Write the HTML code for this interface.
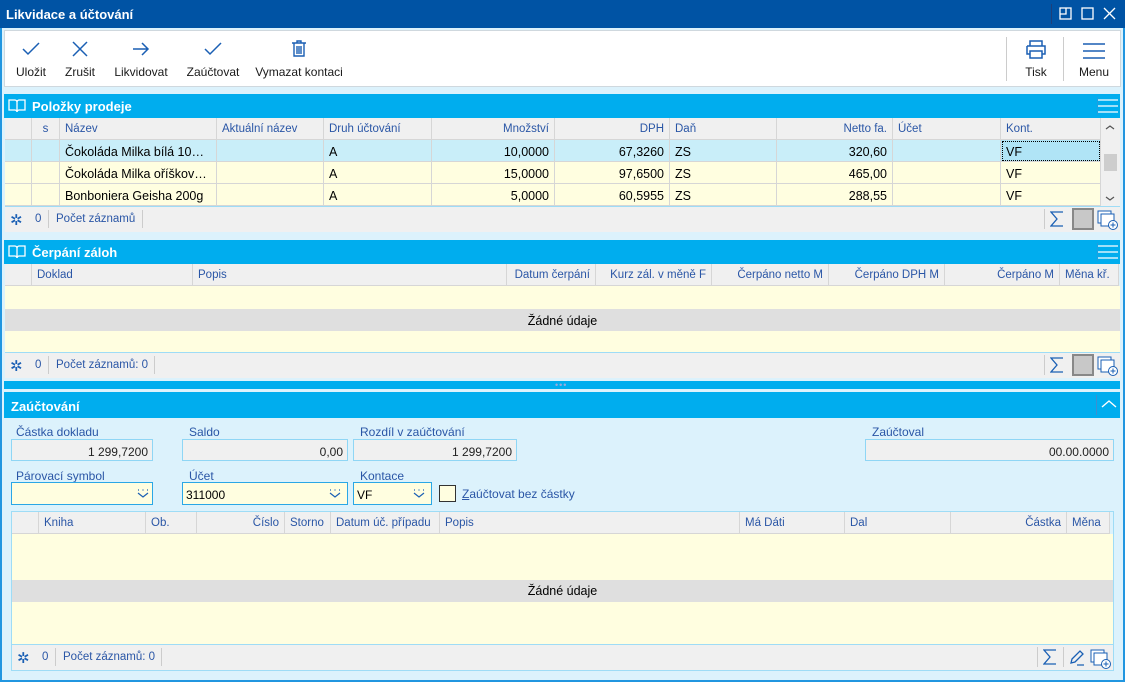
<!DOCTYPE html>
<html><head><meta charset="utf-8"><style>
*{box-sizing:border-box;margin:0;padding:0}
body{width:1125px;height:682px;overflow:hidden;background:#dcf2fc;font-family:"Liberation Sans",sans-serif;font-size:12px;color:#000;position:relative}
.a{position:absolute}
.title{left:0;top:0;width:1125px;height:28px;background:#0053a4;color:#fff;font-weight:bold;font-size:13px;padding:7px 0 0 6px}
.frame{left:0;top:28px;width:1125px;height:654px;border:2px solid #2196e0;border-top:none}
.tb{left:4px;top:30px;width:1117px;height:57px;background:#fff;border:1px solid #cfd8de}
.btn{position:absolute;top:0;text-align:center;font-size:12px;color:#1a1a1a}
.btn svg{display:block;margin:10px auto 0}
.btn span{display:block;margin-top:8px}
.sh{left:4px;width:1116px;background:#00adee;color:#fff;font-weight:bold;font-size:13px}
.row{position:absolute;left:5px;display:flex;height:22px}
.row div{border-right:1px solid #d6d6d6;border-bottom:1px solid #d6d6d6;padding:5px 5px 0;white-space:nowrap;overflow:hidden;font-size:12.5px}
.hd div{color:#2a56a6;font-size:11.5px;background:#f0f0f0;padding-top:5px}
.r{text-align:right}
.yel div{background:#fffee0}
.sel div{background:#c9eef9}
.foot{left:5px;width:1115px;height:26px;background:#f0f0f0;border-top:1px solid #9edcf6;color:#2a56a6;font-size:11.5px}
.lbl{color:#2a56a6;font-size:12px}
.inp{height:22px;border:1px solid #8fd6f5;background:#f0f0f0;text-align:right;padding:5px 4px 0 0;font-size:12px;color:#222}
.inpy{height:23px;border:1px solid #2aa7e6;background:#fffee0;padding:5px 0 0 3px}
</style></head><body>
<div class="a title">Likvidace a účtování</div>
<div class="a" style="left:1051px;top:4px;width:1px;height:20px;background:#1d3f7a"></div>
<svg class="a" style="left:1058px;top:6px" width="60" height="16" viewBox="0 0 60 16" fill="none" stroke="#fff" stroke-width="1.3"><rect x="2" y="2" width="11" height="11"/><path d="M2 8h6V2"/><rect x="24" y="2" width="11" height="11"/><path d="M46 2l11 11M57 2L46 13"/></svg>
<div class="a frame"></div>
<div class="a tb">
 <div class="btn" style="left:6px;width:40px"><svg width="20" height="16"><path d="M2 8l5 5 11-11" fill="none" stroke="#1a5fb4" stroke-width="1.5"/></svg><span>Uložit</span></div>
 <div class="btn" style="left:55px;width:40px"><svg width="20" height="16"><path d="M3 1l14 14M17 1L3 15" fill="none" stroke="#1a5fb4" stroke-width="1.5"/></svg><span>Zrušit</span></div>
 <div class="btn" style="left:104px;width:64px"><svg width="20" height="16"><path d="M2 8h15M11 2l6 6-6 6" fill="none" stroke="#1a5fb4" stroke-width="1.5"/></svg><span>Likvidovat</span></div>
 <div class="btn" style="left:176px;width:64px"><svg width="20" height="16"><path d="M2 8l5 5 11-11" fill="none" stroke="#1a5fb4" stroke-width="1.5"/></svg><span>Zaúčtovat</span></div>
 <div class="btn" style="left:248px;width:92px"><svg width="20" height="18" style="margin-top:8px"><path d="M3 4h14M8 4V2h4v2M5 4v13h10V4M8 7v8M10 7v8M12 7v8" fill="none" stroke="#1a5fb4" stroke-width="1.4"/></svg><span>Vymazat kontaci</span></div>
 <div class="a" style="left:1001px;top:6px;width:1px;height:44px;background:#ccc"></div>
 <div class="a" style="left:1058px;top:6px;width:1px;height:44px;background:#ccc"></div>
 <div class="btn" style="left:1010px;width:42px"><svg width="24" height="20" style="margin-top:8px"><path d="M6 7V2h12v5M3 7h18v8h-3M6 15H3V7M6 12h12v7H6z" fill="none" stroke="#1a5fb4" stroke-width="1.5"/></svg><span style="margin-top:6px">Tisk</span></div>
 <div class="btn" style="left:1064px;width:50px"><svg width="24" height="20" style="margin-top:10px"><path d="M1 3h22M1 10h22M1 17h22" stroke="#1a5fb4" stroke-width="1.5"/></svg><span style="margin-top:4px">Menu</span></div>
</div>

<div class="a sh" style="top:94px;height:24px;padding:5px 0 0 28px">Položky prodeje</div>
<svg class="a" style="left:8px;top:98px" width="18" height="16"><path d="M1 2h6c1 0 2 1 2 2v10c0-1-1-2-2-2H1zM17 2h-6c-1 0-2 1-2 2v10c0-1 1-2 2-2h6z" fill="none" stroke="#fff" stroke-width="1.3"/></svg>
<svg class="a" style="left:1097px;top:97px" width="22" height="18"><path d="M1 3h20M1 9h20M1 15h20" stroke="#fff" stroke-width="1.3"/><path d="M0 0v18" stroke="#3c8fd0"/></svg>
<div class="row hd" style="top:118px"><div style="width:27px"></div><div style="width:28px;text-align:center">s</div><div style="width:157px">Název</div><div style="width:107px">Aktuální název</div><div style="width:108px">Druh účtování</div><div class="r" style="width:123px">Množství</div><div class="r" style="width:115px">DPH</div><div style="width:107px">Daň</div><div class="r" style="width:116px">Netto fa.</div><div style="width:108px">Účet</div><div style="width:100px">Kont.</div></div>
<div class="row sel" style="top:140px"><div style="width:27px"></div><div style="width:28px"></div><div style="width:157px">Čokoláda Milka bílá 10…</div><div style="width:107px"></div><div style="width:108px">A</div><div class="r" style="width:123px">10,0000</div><div class="r" style="width:115px">67,3260</div><div style="width:107px">ZS</div><div class="r" style="width:116px">320,60</div><div style="width:108px"></div><div style="width:100px;background:#b0e4f6;outline:1px dotted #000;outline-offset:-2px">VF</div></div>
<div class="row yel" style="top:162px"><div style="width:27px"></div><div style="width:28px"></div><div style="width:157px">Čokoláda Milka oříškov…</div><div style="width:107px"></div><div style="width:108px">A</div><div class="r" style="width:123px">15,0000</div><div class="r" style="width:115px">97,6500</div><div style="width:107px">ZS</div><div class="r" style="width:116px">465,00</div><div style="width:108px"></div><div style="width:100px">VF</div></div>
<div class="row yel" style="top:184px"><div style="width:27px"></div><div style="width:28px"></div><div style="width:157px">Bonboniera Geisha 200g</div><div style="width:107px"></div><div style="width:108px">A</div><div class="r" style="width:123px">5,0000</div><div class="r" style="width:115px">60,5955</div><div style="width:107px">ZS</div><div class="r" style="width:116px">288,55</div><div style="width:108px"></div><div style="width:100px">VF</div></div>
<div class="a" style="left:1101px;top:118px;width:19px;height:88px;background:#f0f0f0"></div>
<div class="a" style="left:1104px;top:154px;width:13px;height:17px;background:#cdcdcd"></div>
<svg class="a" style="left:1105px;top:124px" width="10" height="80"><path d="M1 5l4-3 4 3M1 73l4 3 4-3" fill="none" stroke="#555" stroke-width="1.2"/></svg>
<div class="a foot" style="top:206px"></div>

<div class="a sh" style="top:240px;height:24px;padding:5px 0 0 28px">Čerpání záloh</div>
<svg class="a" style="left:8px;top:244px" width="18" height="16"><path d="M1 2h6c1 0 2 1 2 2v10c0-1-1-2-2-2H1zM17 2h-6c-1 0-2 1-2 2v10c0-1 1-2 2-2h6z" fill="none" stroke="#fff" stroke-width="1.3"/></svg>
<svg class="a" style="left:1097px;top:243px" width="22" height="18"><path d="M1 3h20M1 9h20M1 15h20" stroke="#fff" stroke-width="1.3"/><path d="M0 0v18" stroke="#3c8fd0"/></svg>
<div class="row hd" style="top:264px"><div style="width:27px"></div><div style="width:161px">Doklad</div><div style="width:314px">Popis</div><div class="r" style="width:89px">Datum čerpání</div><div class="r" style="width:116px">Kurz zál. v měně F</div><div class="r" style="width:117px">Čerpáno netto M</div><div class="r" style="width:116px">Čerpáno DPH M</div><div class="r" style="width:115px">Čerpáno M</div><div style="width:59px">Měna kř.</div></div>
<div class="a" style="left:5px;top:286px;width:1115px;height:23px;background:#fffee0"></div>
<div class="a" style="left:5px;top:309px;width:1115px;height:22px;background:#dfdfdf;text-align:center;padding-top:5px;font-size:12.5px">Žádné údaje</div>
<div class="a" style="left:5px;top:331px;width:1115px;height:22px;background:#fffee0"></div>
<div class="a foot" style="top:352px"></div>

<div class="a" style="left:4px;top:381px;width:1116px;height:8px;background:#00adee"></div>
<div class="a" style="left:555px;top:380px;color:#9ad;font-size:9px;letter-spacing:1px">•••</div>

<div class="a sh" style="top:392px;height:26px;padding:7px 0 0 7px">Zaúčtování</div>
<div class="a" style="left:1096px;top:395px;width:1px;height:20px;background:#3c8fd0"></div>
<svg class="a" style="left:1100px;top:398px" width="18" height="12"><path d="M2 9l7-6 7 6" fill="none" stroke="#fff" stroke-width="1.4"/></svg>

<div class="a lbl" style="left:16px;top:425px">Částka dokladu</div>
<div class="a lbl" style="left:189px;top:425px">Saldo</div>
<div class="a lbl" style="left:360px;top:425px">Rozdíl v zaúčtování</div>
<div class="a lbl" style="left:872px;top:425px">Zaúčtoval</div>
<div class="a inp" style="left:11px;top:439px;width:142px">1 299,7200</div>
<div class="a inp" style="left:182px;top:439px;width:166px">0,00</div>
<div class="a inp" style="left:353px;top:439px;width:164px">1 299,7200</div>
<div class="a inp" style="left:865px;top:439px;width:249px">00.00.0000</div>
<div class="a lbl" style="left:16px;top:469px">Párovací symbol</div>
<div class="a lbl" style="left:189px;top:469px">Účet</div>
<div class="a lbl" style="left:360px;top:469px">Kontace</div>
<div class="a inpy" style="left:11px;top:482px;width:142px"></div>
<div class="a inpy" style="left:182px;top:482px;width:166px">311000</div>
<div class="a inpy" style="left:353px;top:482px;width:79px">VF</div>
<svg class="a" style="left:137px;top:489px" width="14" height="10"><path d="M1 4l5 4 5-4M1 1h1M5.5 1h1M10 1h1" fill="none" stroke="#1a5fb4" stroke-width="1.2"/></svg>
<svg class="a" style="left:329px;top:489px" width="14" height="10"><path d="M1 4l5 4 5-4M1 1h1M5.5 1h1M10 1h1" fill="none" stroke="#1a5fb4" stroke-width="1.2"/></svg>
<svg class="a" style="left:413px;top:489px" width="14" height="10"><path d="M1 4l5 4 5-4M1 1h1M5.5 1h1M10 1h1" fill="none" stroke="#1a5fb4" stroke-width="1.2"/></svg>
<div class="a" style="left:439px;top:485px;width:17px;height:17px;border:1px solid #333;background:#fffee0"></div>
<div class="a lbl" style="left:462px;top:487px"><u>Z</u>aúčtovat bez částky</div>

<div class="a" style="left:11px;top:511px;width:1103px;height:160px;border:1px solid #9edcf6"></div>
<div class="row hd" style="left:12px;top:512px"><div style="width:27px"></div><div style="width:107px">Kniha</div><div style="width:51px">Ob.</div><div class="r" style="width:88px">Číslo</div><div style="width:46px">Storno</div><div style="width:109px">Datum úč. případu</div><div style="width:300px">Popis</div><div style="width:105px">Má Dáti</div><div style="width:106px">Dal</div><div class="r" style="width:116px">Částka</div><div style="width:43px">Měna</div></div>
<div class="a" style="left:12px;top:534px;width:1101px;height:46px;background:#fffee0"></div>
<div class="a" style="left:12px;top:580px;width:1101px;height:22px;background:#dfdfdf;text-align:center;padding-top:4px;font-size:12.5px">Žádné údaje</div>
<div class="a" style="left:12px;top:602px;width:1101px;height:42px;background:#fffee0"></div>
<div class="a foot" style="left:12px;width:1101px;top:644px"></div>

<div class="a" style="left:10px;top:211px;color:#1a5fb4;font-size:15px">✲</div>
<div class="a lbl" style="left:35px;top:213px;font-size:11.5px">0</div>
<div class="a" style="left:48px;top:210px;width:1px;height:18px;background:#ccc"></div>
<div class="a lbl" style="left:56px;top:213px;font-size:11.5px">Počet záznamů</div>
<div class="a" style="left:142px;top:210px;width:1px;height:18px;background:#ccc"></div>

<div class="a" style="left:10px;top:357px;color:#1a5fb4;font-size:15px">✲</div>
<div class="a lbl" style="left:35px;top:359px;font-size:11.5px">0</div>
<div class="a" style="left:48px;top:356px;width:1px;height:18px;background:#ccc"></div>
<div class="a lbl" style="left:56px;top:359px;font-size:11.5px">Počet záznamů: 0</div>
<div class="a" style="left:154px;top:356px;width:1px;height:18px;background:#ccc"></div>

<div class="a" style="left:17px;top:649px;color:#1a5fb4;font-size:15px">✲</div>
<div class="a lbl" style="left:42px;top:651px;font-size:11.5px">0</div>
<div class="a" style="left:55px;top:648px;width:1px;height:18px;background:#ccc"></div>
<div class="a lbl" style="left:63px;top:651px;font-size:11.5px">Počet záznamů: 0</div>
<div class="a" style="left:161px;top:648px;width:1px;height:18px;background:#ccc"></div>

<div class="a" style="left:1044px;top:209px;width:1px;height:20px;background:#ccc"></div>
<svg class="a" style="left:1050px;top:211px" width="14" height="16"><path d="M13 1H1l6 7-6 7h12" fill="none" stroke="#1a5fb4" stroke-width="1.3"/></svg>
<div class="a" style="left:1072px;top:208px;width:22px;height:22px;background:#c8c8c8;border:2px solid #888"></div>
<svg class="a" style="left:1097px;top:210px" width="22" height="20"><rect x="1" y="1" width="13" height="12" fill="#fff" stroke="#1a5fb4"/><rect x="4" y="4" width="13" height="12" fill="#fff" stroke="#1a5fb4"/><circle cx="16" cy="15" r="4.5" fill="#fff" stroke="#1a5fb4"/><path d="M16 12.5v5M13.5 15h5" stroke="#1a5fb4"/></svg>
<div class="a" style="left:1044px;top:355px;width:1px;height:20px;background:#ccc"></div>
<svg class="a" style="left:1050px;top:357px" width="14" height="16"><path d="M13 1H1l6 7-6 7h12" fill="none" stroke="#1a5fb4" stroke-width="1.3"/></svg>
<div class="a" style="left:1072px;top:354px;width:22px;height:22px;background:#c8c8c8;border:2px solid #888"></div>
<svg class="a" style="left:1097px;top:356px" width="22" height="20"><rect x="1" y="1" width="13" height="12" fill="#fff" stroke="#1a5fb4"/><rect x="4" y="4" width="13" height="12" fill="#fff" stroke="#1a5fb4"/><circle cx="16" cy="15" r="4.5" fill="#fff" stroke="#1a5fb4"/><path d="M16 12.5v5M13.5 15h5" stroke="#1a5fb4"/></svg>
<div class="a" style="left:1037px;top:647px;width:1px;height:20px;background:#ccc"></div>
<div class="a" style="left:1063px;top:647px;width:1px;height:20px;background:#ccc"></div>
<svg class="a" style="left:1043px;top:649px" width="14" height="16"><path d="M13 1H1l6 7-6 7h12" fill="none" stroke="#1a5fb4" stroke-width="1.3"/></svg>
<svg class="a" style="left:1068px;top:649px" width="18" height="18"><path d="M3 14l1-4 8-8 3 3-8 8zM9 16h7" fill="none" stroke="#1a5fb4" stroke-width="1.3"/></svg>
<svg class="a" style="left:1090px;top:649px" width="22" height="20"><rect x="1" y="1" width="13" height="12" fill="#fff" stroke="#1a5fb4"/><rect x="4" y="4" width="13" height="12" fill="#fff" stroke="#1a5fb4"/><circle cx="16" cy="15" r="4.5" fill="#fff" stroke="#1a5fb4"/><path d="M16 12.5v5M13.5 15h5" stroke="#1a5fb4"/></svg>
</body></html>
